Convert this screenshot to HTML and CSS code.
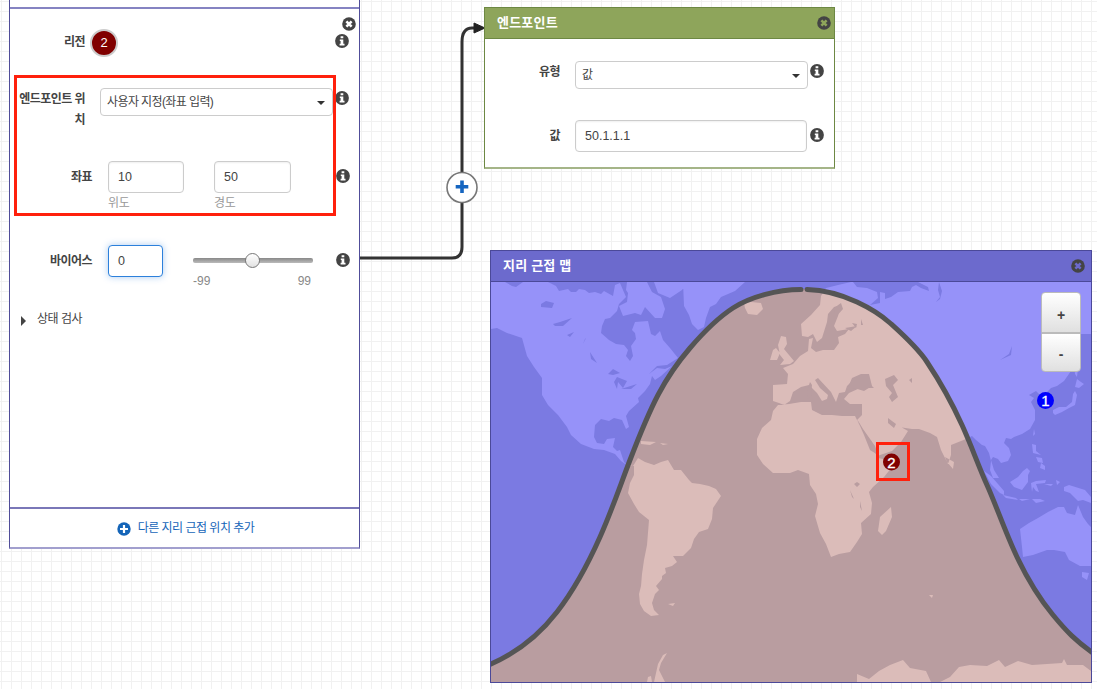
FILE: index.html
```html
<!DOCTYPE html>
<html lang="ko">
<head>
<meta charset="utf-8">
<title>트래픽 정책</title>
<link rel="stylesheet" href="styles.css">
</head>
<body>
<svg class="defs" width="0" height="0">
  <symbol id="close" viewBox="0 0 14 14"><circle cx="7" cy="7" r="6.8" fill="#444"/><path d="M4.400 4.400l5.200 5.200M9.600 4.400L4.400 9.600" stroke="var(--x,#fff)" stroke-width="2.600"/></symbol>
  <symbol id="info" viewBox="0 0 14 14"><circle cx="7" cy="7" r="6.9" fill="#444"/><path d="M5.600 2.200h2.700v2.100H5.600zM4.800 5.400h3.500v4.300h1.200v1.700H4.600V9.700h1V7.100H4.800z" fill="#fff"/></symbol>
</svg>
<main class="canvas">
  <svg class="wires" viewBox="0 0 1097 689">
    <path d="M360 258H452Q462 258 462 247V42Q462 28 472 28H476" fill="none" stroke="#333" stroke-width="3"/>
    <path d="M474 23L485 28L474 33Z" fill="#222" stroke="#222"/>
    <circle cx="462" cy="187.500" r="15" fill="#fff" stroke="#777" stroke-width="1.600"/>
    <path d="M462 180.500v12.500M455.700 186.700h12.600" stroke="#1565c0" stroke-width="3.600"/>
  </svg>

  <section class="node location">
    <div class="strip"></div>
    <div class="close-line"><svg class="icon"><use href="#close"/></svg></div>
    <div class="row region"><label>리전</label><span class="badge">2</span><svg class="icon"><use href="#info"/></svg></div>
    <div class="row place"><label>엔드포인트 위치</label><div class="select">사용자 지정(좌표 입력)</div><svg class="icon"><use href="#info"/></svg></div>
    <div class="row coords"><label>좌표</label>
      <div class="field"><div class="input">10</div><small>위도</small></div>
      <div class="field"><div class="input">50</div><small>경도</small></div>
      <svg class="icon"><use href="#info"/></svg></div>
    <div class="row bias"><label>바이어스</label><div class="input focus">0</div>
      <div class="slider"><div class="track"><i></i></div><div class="range"><span>-99</span><span>99</span></div></div>
      <svg class="icon"><use href="#info"/></svg></div>
    <div class="health"><i></i>상태 검사</div>
    <footer><svg class="plus" viewBox="0 0 14 14"><circle cx="7" cy="7" r="6.700" fill="#1565b8"/><path d="M7 3v8M3 7h8" stroke="#fff" stroke-width="2.200"/></svg><span>다른 지리 근접 위치 추가</span></footer>
  </section>

  <section class="node endpoint">
    <header><span>엔드포인트</span><svg class="icon"><use href="#close"/></svg></header>
    <div class="row type"><label>유형</label><div class="select">값</div><svg class="icon"><use href="#info"/></svg></div>
    <div class="row value"><label>값</label><div class="input">50.1.1.1</div><svg class="icon"><use href="#info"/></svg></div>
  </section>

  <section class="node geomap">
    <header><span>지리 근접 맵</span><svg class="icon"><use href="#close"/></svg></header>
    <div class="world">
    <svg class="map" viewBox="491 282 600 400">
      <defs>
        <path id="land" d="M491 282L505 282 512 286 516 287 523 282H548L556 286 559 291 568 289 571 292 576 292 579 289 585 290 589 293 595 292 601 294 604 291 613 296 615 285 620 283 626 297 619 304 617 311 610 318 605 319 602 326 601 333 609 340 616 344 624 345 628 350 626 356 630 361 633 356 631 346 636 339 635 333 632 330 635 322 648 321 651 334 655 336 660 331 663 340 670 348 678 358 667 365 657 366 649 374 657 368 665 369 672 366 661 376 655 380 652 376 650 384 645 391 638 398 639 402 629 411 626 416 629 427 626 429 622 420 614 418 609 421 601 419 595 425 594 437 597 443 604 444 607 439 615 438 613 447 617 451 620 450 624 462 627 465 633 466 638 458 645 462 654 465 661 462 668 460 674 470 681 470 689 480 692 483 700 484 709 486 716 489 721 496 713 508 712 519 708 529 699 532 694 539 691 548 683 556 673 556 677 562 672 566 665 568 666 573 662 576 662 579 656 586 659 590 655 594 652 603 654 610 659 615 651 616 644 611 640 604 639 594 641 586 642 574 644 560 647 545 649 520 639 512 634 504 628 493 630 483 634 475 634 466 628 466 621 461 615 454 604 450 594 449 581 444 571 435 567 427 558 415 548 405 542 395 542 378 534 367 527 356 522 338 507 333 497 328 491 329Z
        M627 282H647L652 292 661 297 665 309 662 318 655 318 645 307 641 315 635 313 623 316 619 306 627 302 628 293 626 290Z
        M654 282H688L682 290 670 298 658 293Z
        M683 282H745L735 291 721 297 716 304 710 307 706 318 704 327 698 330 692 324 689 315 684 306Z
        M745 308L744 303 751 302 761 303 763 309 757 315 748 314Z
        M826 288L821 296 820 305 811 315 801 324 802 336 808 337 813 334 817 342 822 338 827 322 828 314 834 307 841 305 838 316 834 326 837 331 849 329 845 334 838 337 839 343 834 350 823 350 816 352 811 348 813 338 809 339 808 351 800 356 793 364 783 368 788 374 787 384 773 385 773 401 779 403 784 405 790 401 793 392 801 387 809 385 817 393 822 401 827 399 828 395 820 388 815 380 818 378 831 392 836 402 839 393 845 392 847 386 856 377 869 383 874 388 860 388 849 393 844 399 850 404 862 404 862 415 857 420 861 427 871 445 877 456 892 451 901 442 908 431 901 427 898 420 894 417 891 419 899 427 912 429 919 429 930 433 937 437 941 450 948 464 951 455 951 445 966 439 972 436 976 440 982 445 985 446 989 453 991 461 990 470 993 478 999 478 994 470 991 460 993 457 998 459 1001 463 1008 461 1011 455 1009 448 1004 443 1006 438 1011 439 1014 437 1022 434 1030 429 1035 420 1035 410 1031 402 1034 398 1029 395 1036 391 1040 395 1041 402 1046 404 1046 393 1051 388 1057 386 1064 381 1071 371 1073 372 1071 334H1091V282H851L838 285Z
        M778 405L789 404 801 402 811 402 812 410 822 415 832 415 842 416 855 416 859 424 865 433 875 447 878 458 888 460 896 457 892 467 884 477 873 487 869 492 872 503 871 514 861 523 862 534 857 542 850 552 839 554 831 557 826 544 820 533 815 516 818 504 816 494 810 485 809 474 798 470 790 473 773 473 763 464 757 455 757 439 762 428 771 420 773 411Z
        M781 336L786 337 787 344 784 349 789 355 794 361 790 364 780 365 784 360 780 355 778 345ZM776 348L780 353 777 360 770 360 773 350ZM891 507L892 517 886 531 882 535 878 531 880 517ZM945 457L954 462 953 469 947 462ZM641 441L656 442 650 445 641 444ZM660 443L668 444 663 445Z
        M984 471L991 476 998 484 1004 491 1004 495 1000 493 991 484ZM1003 495L1016 498 1018 500 1006 498ZM1019 499L1030 499 1022 501ZM1032 499L1040 499 1045 501 1036 503ZM1010 482L1018 477 1023 471 1027 468 1030 471 1028 475 1028 482 1022 490 1014 487ZM1031 483L1036 481 1046 480 1045 483 1036 484 1039 492 1036 491 1033 487 1032 492ZM1044 484L1053 484 1051 486ZM1056 480L1060 482 1057 485ZM1064 487L1069 485 1085 490 1091 497 1091 503 1083 500 1078 501 1070 493 1064 491ZM1032 444L1036 445 1036 451 1041 455 1033 453ZM1036 457L1042 458 1043 463 1038 462ZM1041 463L1045 466 1045 470 1040 468ZM1034 429L1035 434 1033 436ZM1053 410L1059 407 1066 407 1072 402 1073 394 1075 391 1077 395 1075 405 1069 408 1062 412 1055 415 1053 413ZM1077 379L1081 382 1084 384 1079 388 1075 387ZM1074 366L1078 368 1077 377 1075 374Z
        M1020 529L1029 523 1038 518 1048 512 1058 507 1064 507 1067 513 1075 515 1078 505 1083 517 1088 524 1091 527V566L1080 566 1069 560 1065 552 1054 550 1047 550 1033 555 1023 557 1022 547Z
        M1082 572L1089 573 1087 580 1082 577ZM668 604L675 603 673 606ZM929 595L933 595 932 598ZM677 648L667 653 661 663 659 670 665 682H654L658 664 663 655ZM648 677L651 676 652 682H647ZM857 682V674L869 679 879 671 890 665 903 660 910 668 926 671 931 682ZM940 682L950 677 959 667 970 665 987 666 999 660 1005 667 1018 661 1032 665 1047 664 1062 663 1064 659 1067 665 1083 665 1091 671V682Z"/>
        <path id="lakes" d="M541 304L546 301 554 303 552 308 541 307ZM553 324L560 322 572 318 563 326 555 326ZM567 335L574 332 570 337ZM585 339L583 344 586 338ZM590 352L597 363 591 359ZM608 374L613 369 620 373 613 375ZM614 382L617 377 627 381 623 388 618 382 617 389ZM621 389L637 384 631 389ZM847 390L852 378 861 374 869 374 872 386 864 391 854 388ZM834 308L841 303 843 309 835 318ZM845 328L857 326 851 331ZM852 323L857 324 856 328ZM861 319L863 325 861 325ZM885 379L894 375 898 380 893 385 898 397 892 402 889 397 892 393 886 386ZM888 418L896 424 894 428 888 423ZM857 419L863 429 875 446 878 455 870 450 864 435ZM857 482L860 484 857 487 854 484ZM850 490L854 499 852 497ZM860 501L862 511 860 507ZM909 380L912 378 912 383ZM1000 360L1009 354 1012 346 1011 355ZM936 302L940 297 938 290 939 282 942 291 940 299ZM853 282H878L895 282H918L928 287 929 291 921 288 916 285 912 287 910 291 898 292 891 297 885 299 885 293 880 292 880 303 870 305 878 298 877 292 867 288 857 287ZM810 382L812 385 811 396 808 399 807 391Z"/>
        <clipPath id="zone"><path d="M491 664C516 653 540 634 557 612S588 564 600 537S620 486 630 460S647 416 658 395S678 362 690 348S716 319 733 308S777 289 801 289H807C823 289 842 295 857 302S880 314 890 323S917 347 927 362S952 403 962 425S978 465 987 485S1006 534 1017 557S1039 598 1053 615S1076 641 1093 653V682H491Z"/></clipPath>
        <g id="terrain"><rect x="491" y="282" width="600" height="400" class="sea"/><use href="#land" class="soil"/><use href="#lakes" class="sea"/></g>
      </defs>
      <g class="cool"><use href="#terrain"/></g>
      <g clip-path="url(#zone)" class="warm"><use href="#terrain"/></g>
      <path class="edge" d="M488 665L491 664C516 653 540 634 557 612S588 564 600 537S620 486 630 460S647 416 658 395S678 362 690 348S716 319 733 308S777 289.500 801 289.500"/>
      <path class="edge" d="M807 289.500C823 290 842 295 857 302S880 314 890 323S917 347 927 362S952 403 962 425S978 465 987 485S1006 534 1017 557S1039 598 1053 615S1076 641 1093 653"/>
      <circle cx="1045.500" cy="400.500" r="8.500" fill="#00f"/><text x="1045.500" y="406">1</text>
      <circle cx="891.500" cy="462" r="8.500" fill="#800000"/><text x="891.500" y="467.500">2</text>
    </svg>
    <div class="zoomer"><button>+</button><button>-</button></div>
    </div>
  </section>
  <div class="mark mark-form"></div>
  <div class="mark mark-pin"></div>
</main>
</body>
</html>
```
FILE: styles.css
```css
* { box-sizing: border-box; }
body { margin: 0; font: 12px/21px "Liberation Sans", "Noto Sans CJK KR", sans-serif; color: #444; }
.defs { position: absolute; }
.canvas { position: relative; width: 1097px; height: 689px; overflow: hidden; background: repeating-linear-gradient(90deg, transparent 0 1px, #f1f1f1 1px 2px, transparent 2px 10px), repeating-linear-gradient(transparent 0 1px, #f1f1f1 1px 2px, transparent 2px 10px), #fff; }
.wires { position: absolute; inset: 0; }
.icon { width: 14px; height: 14px; flex: none; display: block; }
.node { position: absolute; background: #fff; }
.row { display: flex; align-items: flex-start; }
.row label { font-weight: bold; text-align: right; flex: none; letter-spacing: -.55px; padding-top: 1px; }
.input, .select { border: 1px solid #ccc; border-radius: 4px; background: #fff; flex: none; }
.input { height: 32px; padding: 0 9px; line-height: 30px; font-size: 12.5px; box-shadow: inset 0 1px 2px #0001; }
.select { height: 28px; padding: 0 7px 0 6px; line-height: 26px; display: flex; align-items: center; justify-content: space-between; letter-spacing: -.6px; }
.select::after { content: ""; border: 4px solid transparent; border-top-color: #333; border-bottom: 0; margin-top: 2px; }

.location { left: 9px; top: 0; width: 351px; height: 549px; border: 1px solid #504d99; border-width: 0 1px 2px; border-bottom-color: #a29fce; display: flex; flex-direction: column; }
.strip { height: 9px; border-bottom: 2px solid #8583c2; flex: none; }
.close-line { display: flex; justify-content: flex-end; padding: 8px 3px 0 0; height: 22px; }
.row.region { height: 59px; }
.region label { width: 75px; }
.badge { flex: none; width: 28px; height: 28px; margin-left: 5px; margin-top: -2px; border-radius: 50%; border: 2px solid #ccc; background: #800000; color: #fff; font-size: 13px; line-height: 24px; text-align: center; }
.region .icon { margin: 3px 10px 0 auto; }
.place { height: 71px; }
.place label { width: 75px; margin-top: -2px; word-break: break-all; }
.place .select { width: 233px; margin: -2px 2px 0 15px; }
.place .icon { margin-top: 1px; }
.coords { height: 84px; }
.coords label, .bias label { width: 82px; margin: 5px 16px 0 0; }
.coords .input { width: 76px; }
.coords .field { width: 106px; flex: none; }
.coords .field + .field .input { width: 77px; }
.coords small { font-size: 12px; line-height: 20px; color: #999; display: block; letter-spacing: -.4px; }
.coords .icon { margin: 8px 0 0 16px; }
.bias { height: 63px; }
.focus { width: 55px; border-color: #2c80db; box-shadow: 0 0 7px #2c80db66; }
.slider { width: 120px; margin: 13px 23px 0 30px; color: #888; }
.track { height: 5px; border-radius: 2px; background: linear-gradient(#888, #bbb); position: relative; }
.track i { position: absolute; left: 52px; top: -5px; width: 15px; height: 15px; border: 1px solid #777; border-radius: 50%; background: linear-gradient(#fff, #e2e2e2); }
.range { display: flex; justify-content: space-between; padding: 8px 2px 0 0; }
.bias .icon { margin-top: 8px; }
.health { display: flex; align-items: center; padding: 1px 0 0 11px; gap: 11px; letter-spacing: -.5px; }
.health i { border: 5px solid transparent; border-left-color: #444; border-right: 0; margin-top: 2px; }
footer { margin-top: auto; height: 40px; border-top: 2px solid #7a77b8; display: flex; align-items: center; justify-content: center; gap: 7px; color: #1565b8; letter-spacing: -.5px; padding-left: 2px; }
.plus { width: 14px; height: 14px; margin-top: 2px; }

.node header { display: flex; justify-content: space-between; align-items: center; color: #fff; font-size: 13px; font-weight: bold; letter-spacing: .2px; padding: 0 3px 0 12px; }
.endpoint { left: 484px; top: 7px; width: 351px; height: 162px; border: 1px solid #6d8843; border-bottom: 2px solid #a5b588; }
.endpoint header { height: 31px; background: #8ea55b; border-bottom: 1px solid #6d8843; --x: #8ea55b; }
.endpoint header span, .geomap header span { margin-top: -1px; }
.endpoint label { width: 75px; }
.type { margin-top: 22px; height: 59px; }
.type .select { width: 233px; margin: 0 2px 0 15px; }
.type .icon { margin-top: 3px; }
.value label { margin-top: 5px; }
.value .input { width: 232px; margin: 0 3px 0 15px; }
.value .icon { margin-top: 8px; }

.geomap { left: 490px; top: 250px; width: 602px; height: 433px; border: 1px solid #4b4999; }
.geomap header { height: 31px; background: #6c6acd; border-bottom: 1px solid #4b4999; --x: #6c6acd; padding-right: 6px; }
.world { position: relative; height: 400px; }
.map { display: block; width: 600px; height: 400px; }
.cool { --sea: #7b7ae2; --soil: #9692f9; }
.warm { --sea: #b99da0; --soil: #dbbcb9; }
.sea { fill: var(--sea); }
.soil { fill: var(--soil); }
.edge { fill: none; stroke: #555; stroke-width: 5; stroke-linecap: round; }
.map text { fill: #fff; stroke: #fff; stroke-width: .3px; font-size: 15px; text-anchor: middle; }
.zoomer { position: absolute; right: 10px; top: 10px; width: 40px; height: 80px; display: flex; flex-direction: column; }
.zoomer button { flex: 1; border: 1px solid #bbb; background: linear-gradient(#fff, #e0e0e0); font: bold 14px "Liberation Sans", sans-serif; color: #444; padding: 4px 0 0; }
.zoomer button:first-child { border-radius: 4px 4px 0 0; }
.zoomer button:last-child { border-radius: 0 0 4px 4px; padding-top: 2px; }
.mark { position: absolute; border: 3px solid #ff200c; }
.mark-form { left: 14px; top: 75px; width: 322px; height: 141px; }
.mark-pin { left: 876px; top: 442px; width: 34px; height: 39px; }
```
